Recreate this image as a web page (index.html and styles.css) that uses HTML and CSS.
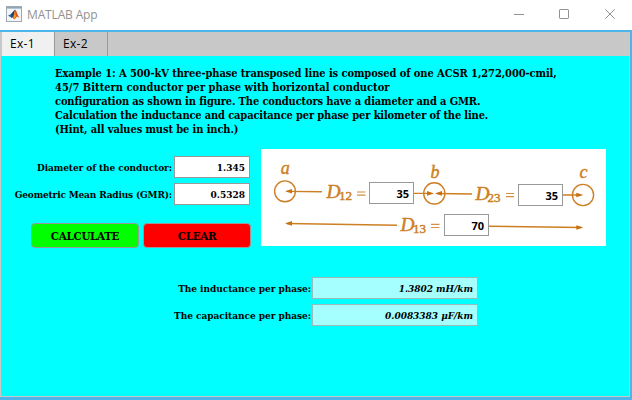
FILE: index.html
```html
<!DOCTYPE html>
<html lang="en">
<head>
<meta charset="utf-8">
<title>MATLAB App</title>
<link rel="stylesheet" href="styles.css">
</head>
<body>
<div class="window">
  <header class="titlebar">
    <svg class="logo" width="16" height="16" viewBox="0 0 16 16">
      <rect x=".5" y=".5" width="15" height="15" fill="#f1f5f9" stroke="#a1a9b1"/>
      <path d="M1 1h14v1.6H1z" fill="#8fa5b8"/>
      <path d="M2 9.5 5.2 8 9 3.7 7.6 10 5.7 12z" fill="#2f6ca8"/>
      <path d="M5.2 8 9 3.7 7.5 10 5.8 12z" fill="#233b6a"/>
      <path d="M9 3.7C10.5 4 11.5 9 13.5 12L11 10.5 8.5 13.5 6.3 11.5C8 10 8 6 9 3.7z" fill="#d95719"/>
      <path d="M9 5.5 9.8 10 8.5 13 7.8 11z" fill="#f5a52c"/>
    </svg>
    <h1 class="title">MATLAB App</h1>
    <svg class="controls" width="104" height="12" viewBox="0 0 104 12" fill="none" stroke="#929292">
      <path d="M0 6.5h10"/>
      <rect x="45.5" y="1.5" width="9" height="9" rx=".6"/>
      <path d="m91.3 1.3 9.4 9.4m0-9.4-9.4 9.4"/>
    </svg>
  </header>
  <main class="frame">
    <nav class="tabs">
      <span class="tab active">Ex-1</span>
      <span class="tab">Ex-2</span>
    </nav>
    <section class="page">
      <div class="problem">
        <p class="l1">Example 1: A 500-kV three-phase transposed line is composed of one ACSR 1,272,000-cmil,</p>
        <p class="l2">45/7 Bittern conductor per phase with horizontal conductor</p>
        <p class="l3">configuration as shown in figure. The conductors have a diameter and a GMR.</p>
        <p class="l4">Calculation the inductance and capacitance per phase per kilometer of the line.</p>
        <p class="l5">(Hint, all values must be in inch.)</p>
      </div>
      <div class="work">
        <div class="inputs">
          <div class="row"><span class="label dia">Diameter of the conductor:</span><span class="field">1.345</span></div>
          <div class="row"><span class="label gmr">Geometric Mean Radius (GMR):</span><span class="field">0.5328</span></div>
          <div class="buttons"><button class="calculate">CALCULATE</button><button class="clear">CLEAR</button></div>
        </div>
        <div class="diagram">
          <svg width="345" height="97" viewBox="261 149 345 97">
            <g class="strokes">
              <circle cx="285" cy="191.3" r="10.4"/>
              <circle cx="434.3" cy="193.4" r="10.6"/>
              <circle cx="583" cy="195" r="10.6"/>
              <path d="M287 191.4 322 191.8M414 193.4H431M437 193.5 472 194M563 195H580M287 223.5 397 225.2M489 226.2 581 227.5"/>
            </g>
            <path class="heads" d="m285 191.3 7-2.3v4.6zM434 193.4l-7-2.3v4.6zM435 193.4l7-2.3v4.6zM583.3 195l-7-2.3v4.6zM285 223.4l7-2.3v4.6zM583.3 227.5l-7-2.3v4.6z"/>
            <g class="math">
              <text x="280.8" y="174">a</text><text x="430.5" y="177.5">b</text><text x="579.5" y="177.5">c</text>
              <text x="326.5" y="197.5" textLength="14" lengthAdjust="spacingAndGlyphs">D</text>
              <text x="475.5" y="199.5" textLength="14" lengthAdjust="spacingAndGlyphs">D</text>
              <text x="400.5" y="230.5" textLength="14" lengthAdjust="spacingAndGlyphs">D</text>
            </g>
            <g class="sub">
              <text x="339" y="200.3" textLength="13">12</text><text x="487.5" y="202" textLength="13">23</text><text x="413" y="233" textLength="13">13</text>
            </g>
            <path class="equals" d="M357 192h8.5M357 195.2h8.5M506 193.5h8M506 196.7h8M431 224.3h8.5M431 227.5h8.5"/>
          </svg>
          <span class="distance d12">35</span>
          <span class="distance d23">35</span>
          <span class="distance d13">70</span>
        </div>
      </div>
      <div class="results">
        <div class="row"><span class="label ind">The inductance per phase:</span><output class="output o1">1.3802 mH/km</output></div>
        <div class="row"><span class="label cap">The capacitance per phase:</span><output class="output o2">0.0083383 μF/km</output></div>
      </div>
    </section>
  </main>
</div>
</body>
</html>
```
FILE: styles.css
```css
* { box-sizing: border-box; }
body { margin: 0; overflow: hidden; background: #4cb6ea; color: #000; }
h1, p { margin: 0; }
.window { width: 632px; height: 400px; display: flex; flex-direction: column; background: #4cb6ea; }
.titlebar { height: 30px; display: flex; align-items: center; padding: 0 14px 2px 6px; background: #fff; }
.title { flex: 1; margin-left: 5px; font: 400 12px "Open Sans", sans-serif; color: #929292; letter-spacing: -.15px; }
.frame { width: 630px; height: 365px; margin-top: 2px; border: solid #c8c8c8; border-width: 0 1px 1px; background: #0ff; }
.tabs { height: 24px; display: flex; padding-left: 1px; background: #c8c8c8; }
.tab { width: 53px; padding-left: 8px; border-right: 1px solid #999; font: 12px/23px "Open Sans", sans-serif; letter-spacing: .3px; }
.tab.active { background: #f0f0f0; }
.page { font: bold 11px "DejaVu Serif Condensed", "DejaVu Serif", serif; }
.problem { height: 93px; padding: 11px 0 0 54px; line-height: 14px; white-space: nowrap; }
.l1 { letter-spacing: -.07px; }
.l2 { letter-spacing: .03px; }
.l3 { letter-spacing: -.13px; }
.l4 { letter-spacing: -.14px; }
.l5 { letter-spacing: -.1px; }
.work { display: flex; gap: 11px; height: 97px; }
.inputs { width: 249px; padding-top: 7px; display: flex; flex-direction: column; gap: 5px; }
.row { display: flex; justify-content: flex-end; align-items: center; gap: 1px; height: 22px; white-space: nowrap; }
.inputs .row { gap: 2px; }
.label { font-size: 10px; letter-spacing: -.08px; }
.label.gmr { letter-spacing: -.16px; }
.label.ind, .label.cap { letter-spacing: -.04px; }
.field { width: 76px; height: 22px; padding-right: 4px; border: 1px solid #999; background: #fff; text-align: right; font-size: 10px; line-height: 21px; }
.buttons { display: flex; gap: 4px; padding: 13px 0 0 30px; margin-right: -1px; }
.buttons button { width: 108px; height: 25px; padding: 0; border: 1px solid #999; border-radius: 4px; font: bold 11.5px "DejaVu Serif Condensed", serif; letter-spacing: -.3px; color: #000; }
.buttons .calculate { background: #0f0; }
.buttons .clear { background: #f00; }
.diagram { position: relative; width: 345px; height: 97px; background: #fff; }
.diagram svg { display: block; }
.strokes { fill: none; stroke: #cd7f24; stroke-width: 1.4; }
.heads { fill: #c8720f; }
.math { font: italic 18px "Liberation Serif", serif; fill: #cd7f24; stroke: #cd7f24; stroke-width: .45; }
.sub { font: 13px "Liberation Serif", serif; fill: #cd7f24; stroke: #cd7f24; stroke-width: .5; }
.equals { stroke: #d4903f; stroke-width: 1.2; }
.distance { position: absolute; width: 45px; height: 22px; padding-right: 4px; border: 1px solid #999; background: #fff; text-align: right; font: bold 11px/21px "Open Sans", sans-serif; }
.d12 { left: 108px; top: 33px; }
.d23 { left: 257px; top: 35px; }
.d13 { left: 183px; top: 65px; }
.results { width: 477px; padding-top: 31px; display: flex; flex-direction: column; gap: 5px; }
.output { width: 166px; height: 22px; padding-right: 4px; border: 1px solid #9bb; background: #a6ffff; text-align: right; font-size: 10px; font-style: italic; line-height: 21px; letter-spacing: -.03px; }
```
